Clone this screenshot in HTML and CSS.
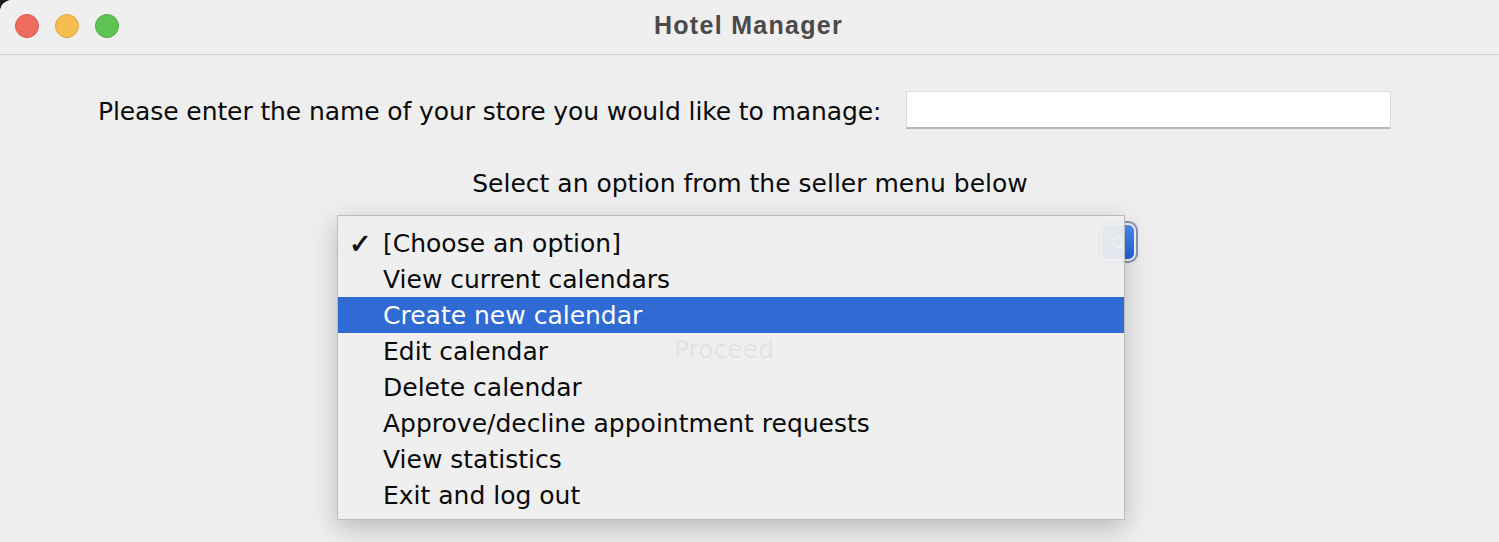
FILE: index.html
```html
<!DOCTYPE html>
<html lang="en">
<head>
<meta charset="utf-8">
<title>Hotel Manager</title>
<link rel="stylesheet" href="styles.css">
</head>
<body>
<div class="window">
  <header class="titlebar">
    <div class="lights">
      <span class="light red"></span>
      <span class="light yellow"></span>
      <span class="light green"></span>
    </div>
    <div class="title">Hotel Manager</div>
  </header>
  <main class="content">
    <div class="store-row">
      <label class="store-label" for="store">Please enter the name of your store you would like to manage:</label>
      <input class="store-input" id="store" type="text">
    </div>
    <div class="prompt">Select an option from the seller menu below</div>
    <div class="combo-row">
      <div class="combo">
        <span class="combo-btn">
          <svg width="12" height="18" viewBox="0 0 12 18"><path d="M2 7 L6 3 L10 7 M2 11 L6 15 L10 11" fill="none" stroke="#fff" stroke-width="1.8" stroke-linecap="round" stroke-linejoin="round"/></svg>
        </span>
      </div>
    </div>
    <div class="proceed-row">
      <button class="proceed" type="button">Proceed</button>
    </div>
    <ul class="popup">
      <li class="item checked"><span class="check">✓</span>[Choose an option]</li>
      <li class="item">View current calendars</li>
      <li class="item selected">Create new calendar</li>
      <li class="item">Edit calendar</li>
      <li class="item">Delete calendar</li>
      <li class="item">Approve/decline appointment requests</li>
      <li class="item">View statistics</li>
      <li class="item">Exit and log out</li>
    </ul>
  </main>
</div>
</body>
</html>
```
FILE: styles.css
```css
html, body {
  margin: 0;
  padding: 0;
  background: #1c1c1c;
}
body {
  width: 1499px;
  height: 542px;
  overflow: hidden;
  font-family: "DejaVu Sans", "Liberation Sans", sans-serif;
  color: #0a0a0a;
}
.window {
  position: relative;
  width: 1499px;
  height: 542px;
  background: #eeeeee;
  border-top-left-radius: 12px;
  overflow: hidden;
}
.titlebar {
  height: 54px;
  background: #efefef;
  border-bottom: 1px solid #d0d0d0;
  display: flex;
  align-items: center;
  justify-content: center;
  position: relative;
}
.lights {
  position: absolute;
  left: 15px;
  top: 14px;
  display: flex;
  gap: 16px;
}
.light {
  width: 24px;
  height: 24px;
  border-radius: 50%;
  box-sizing: border-box;
}
.light.red { background: #ee6b60; border: 1px solid #d9584e; }
.light.yellow { background: #f6be4f; border: 1px solid #dea63c; }
.light.green { background: #5dc453; border: 1px solid #4bab42; }
.title {
  font-family: "Liberation Sans", "Open Sans", sans-serif;
  font-weight: 700;
  font-size: 25px;
  letter-spacing: 1.3px;
  color: #4a4a4a;
  margin-top: -4px;
  margin-left: -2px;
}
.content {
  position: relative;
  height: 487px;
}
.store-row {
  display: flex;
  align-items: center;
  padding-top: 36px;
  padding-left: 98px;
  height: 38px;
}
.store-label {
  font-size: 25px;
  letter-spacing: -0.1px;
  width: 808px;
  white-space: nowrap;
  margin-top: 2px;
}
.store-input {
  width: 485px;
  height: 38px;
  box-sizing: border-box;
  border: 1px solid #dcdcdc;
  border-bottom: 2px solid #b8b8b8;
  background: #fff;
  margin: 0;
  padding: 0 6px;
}
.prompt {
  text-align: center;
  font-size: 25px;
  line-height: 29px;
  margin-top: 40px;
  padding-left: 1px;
}
.combo-row {
  display: flex;
  justify-content: center;
  margin-top: 24px;
  padding-right: 21px;
}
.combo {
  width: 798px;
  height: 40px;
  box-sizing: border-box;
  background: #fff;
  border-radius: 6px;
  border: 1px solid #d0d0d0;
  display: flex;
  align-items: center;
  justify-content: flex-end;
}
.combo-btn {
  width: 32px;
  height: 34px;
  border-radius: 6px;
  background: linear-gradient(#4b8ff5, #1f63e0);
  box-shadow: 0 0 0 2px #f4f4f4, 0 0 0 4px #8595b0;
  display: flex;
  align-items: center;
  justify-content: center;
  margin-right: 3px;
}
.proceed-row {
  display: flex;
  justify-content: center;
  margin-top: 67px;
  padding-right: 51px;
}
.proceed {
  font-family: "DejaVu Sans", "Liberation Sans", sans-serif;
  font-size: 25px;
  color: #111;
  background: #fff;
  border: 1px solid #c9c9c9;
  border-radius: 6px;
  width: 132px;
  height: 40px;
  padding: 0;
}
.popup {
  position: absolute;
  left: 337px;
  top: 160px;
  width: 788px;
  height: 305px;
  box-sizing: border-box;
  margin: 0;
  padding: 9px 0 0 0;
  list-style: none;
  background: rgba(238, 238, 238, 0.95);
  border: 1px solid #bdbdbd;
  box-shadow: 0 8px 24px rgba(0, 0, 0, 0.22);
}
.item {
  height: 36px;
  box-sizing: border-box;
  padding-top: 2px;
  line-height: 34px;
  font-size: 25px;
  padding-left: 45px;
  color: #0a0a0a;
  position: relative;
  white-space: nowrap;
}
.item.selected {
  background: #2f6bd3;
  color: #fff;
}
.check {
  position: absolute;
  left: 11px;
  top: 2px;
  font-size: 27px;
  font-weight: 700;
  -webkit-text-stroke: 0.7px #0a0a0a;
}
```
